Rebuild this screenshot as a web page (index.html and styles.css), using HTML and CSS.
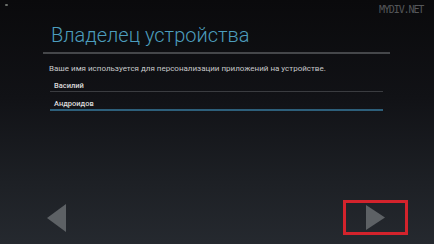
FILE: index.html
```html
<!DOCTYPE html>
<html lang="ru">
  <head>
    <meta charset="UTF-8">
    <meta name="viewport" content="width=device-width, initial-scale=1.0">
    <title>Владелец устройства</title>
    <link rel="stylesheet" href="styles.css">
  </head>
  <body>
    <div class="screen">
      <span class="status-icon"></span>
      <span class="watermark">MYDIV.NET</span>

      <div class="content">
        <h1 class="title">Владелец устройства</h1>
        <div class="divider"></div>
        <p class="desc">Ваше имя используется для персонализации приложений на устройстве.</p>
        <div class="field">Василий</div>
        <div class="field active">Андроидов</div>
      </div>

      <div class="nav">
        <div class="nav-btn prev">
          <svg width="20" height="28" viewBox="0 0 20 28"><polygon points="19,0 19,28 0,14" fill="#5d6165"/></svg>
        </div>
        <div class="nav-btn next">
          <svg width="19" height="25" viewBox="0 0 19 25"><polygon points="0,0 0,25 19,12.5" fill="#5d6165"/></svg>
        </div>
      </div>
    </div>
  </body>
</html>
```

FILE: styles.css
```css
body {
    margin: 0;
    font-family: Roboto, "Noto Sans", sans-serif;
    background: #0b0b0d;
}

.screen {
    position: relative;
    width: 434px;
    height: 244px;
    display: flex;
    flex-direction: column;
    background: linear-gradient(to bottom, #0a0a0c 0%, #111216 40%, #1d2025 75%, #25292f 100%);
    overflow: hidden;
}

.status-icon {
    position: absolute;
    left: 5px;
    top: 4px;
    width: 3px;
    height: 2px;
    background: #6b6f6a;
    border-radius: 1px;
}

.watermark {
    position: absolute;
    left: 379px;
    top: 4px;
    font-family: "DejaVu Sans Mono", monospace;
    font-size: 10px;
    letter-spacing: -1.1px;
    color: #55575a;
}

.content {
    padding: 23px 0 0 43px;
}

.title {
    margin: 0 0 5px 8px;
    font-size: 20px;
    font-weight: 300;
    line-height: 24px;
    color: #4c9dbd;
}

.divider {
    width: 347px;
    height: 2px;
    background: #45474a;
}

.desc {
    margin: 10px 0 0 6px;
    font-size: 8px;
    line-height: 10px;
    color: #c6c7c9;
}

.field {
    width: 329px;
    margin: 7px 0 0 7px;
    padding: 0 0 1px 4px;
    font-size: 7.5px;
    font-weight: 500;
    line-height: 9px;
    color: #dcdcdc;
    border-bottom: 1px solid #3a3c40;
}

.field.active {
    border-bottom: 2px solid #2d5f7a;
}

.nav {
    margin-top: auto;
    margin-bottom: 9px;
    display: flex;
    justify-content: space-between;
    align-items: center;
    padding: 0 26px 0 47px;
}

.nav-btn {
    display: flex;
    align-items: center;
    justify-content: center;
}

.nav-btn.next {
    width: 59px;
    height: 29px;
    border: 3px solid #d3232c;
}
```
